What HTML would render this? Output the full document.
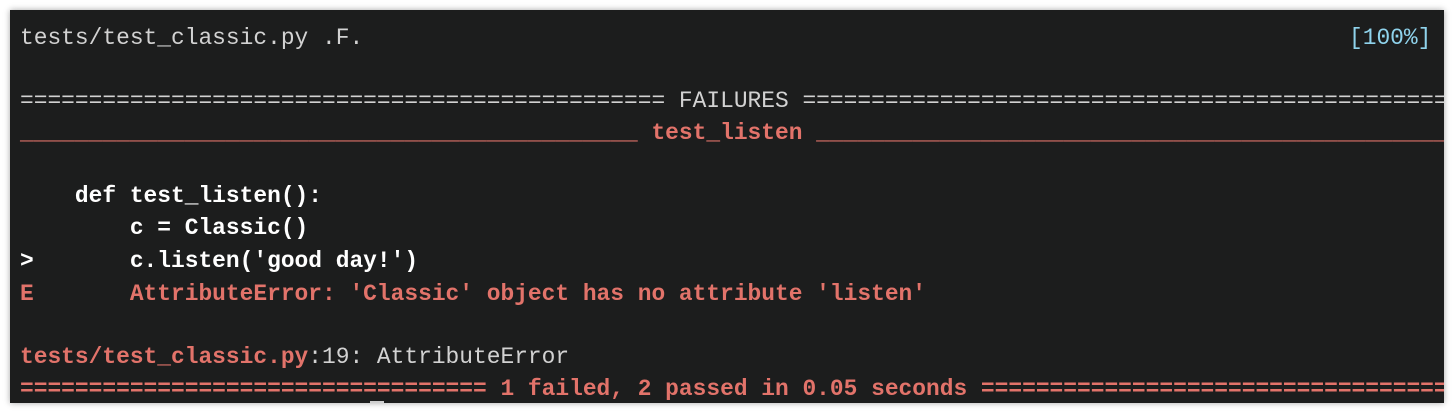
<!DOCTYPE html>
<html><head><meta charset="utf-8"><style>
html,body{margin:0;padding:0;background:#fff;width:1454px;height:414px;overflow:hidden}
.term{position:absolute;left:10px;top:10px;width:1434px;height:393px;background:#1c1d1d;overflow:hidden;box-shadow:0 0 6px rgba(0,0,0,.35)}
.l{position:absolute;left:10px;height:32px;line-height:32px;white-space:pre;font-family:"Liberation Mono","DejaVu Sans Mono",monospace;font-size:22.88px;color:#d2d2d2}
.r{color:#e2736a;font-weight:bold}
.w{color:#fff;font-weight:bold}
.c{color:#8fd3ec}
</style></head><body>
<div class="term">
<div class="l" style="top:12px">tests/test_classic.py .F.</div>
<div class="l c" style="top:12px;left:1339px">[100%]</div>
<div class="l" style="top:75px">=============================================== FAILURES ==============================================================</div>
<div class="l r" style="top:107px">_____________________________________________ test_listen _____________________________________________________________</div>
<div class="l w" style="top:170px">    def test_listen():</div>
<div class="l w" style="top:202px">        c = Classic()</div>
<div class="l w" style="top:235px">&gt;       c.listen('good day!')</div>
<div class="l r" style="top:268px">E       AttributeError: 'Classic' object has no attribute 'listen'</div>
<div class="l" style="top:331px"><span class="r">tests/test_classic.py</span>:19: AttributeError</div>
<div class="l r" style="top:363px">================================== 1 failed, 2 passed in 0.05 seconds ==================================================</div>
<div style="position:absolute;left:360px;top:391px;width:14px;height:3px;background:#cfcfcf"></div>
</div>
</body></html>
